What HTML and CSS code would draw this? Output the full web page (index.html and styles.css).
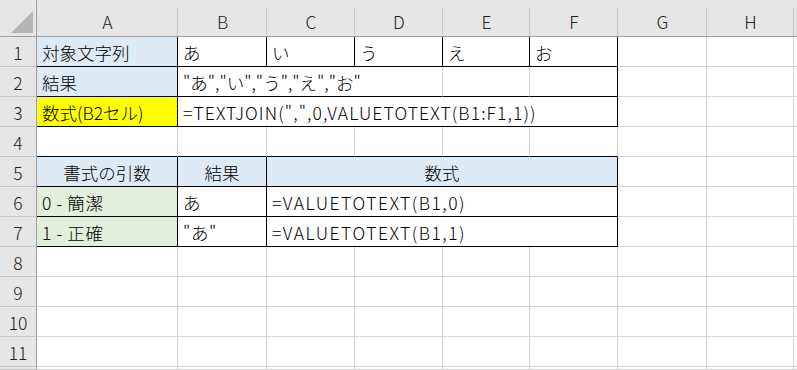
FILE: index.html
```html
<!DOCTYPE html>
<html lang="ja">
<head>
    <meta charset="UTF-8">
    <meta name="viewport" content="width=device-width, initial-scale=1.0">
    <title>VALUETOTEXT</title>
    <link rel="stylesheet" href="styles.css">
</head>
<body>
    <div class="sheet">
        <!-- column headers -->
        <div class="corner"><span class="tri"></span></div>
        <div class="colhead">A</div>
        <div class="colhead">B</div>
        <div class="colhead">C</div>
        <div class="colhead">D</div>
        <div class="colhead">E</div>
        <div class="colhead">F</div>
        <div class="colhead">G</div>
        <div class="colhead">H</div>
        <div class="colhead rest"></div>

        <!-- row 1 -->
        <div class="rowhead">1</div>
        <div class="c blue br bb">対象文字列</div>
        <div class="c br bb">あ</div>
        <div class="c br bb">い</div>
        <div class="c br bb">う</div>
        <div class="c br bb">え</div>
        <div class="c br bb">お</div>
        <div class="c"></div>
        <div class="c"></div>
        <div class="c rest"></div>

        <!-- row 2 -->
        <div class="rowhead">2</div>
        <div class="c blue br bb">結果</div>
        <div class="c bb span3">"あ","い","う","え","お"</div>
        <div class="c bb"></div>
        <div class="c br bb"></div>
        <div class="c"></div>
        <div class="c"></div>
        <div class="c rest"></div>

        <!-- row 3 -->
        <div class="rowhead">3</div>
        <div class="c yellow br bb">数式(B2セル)</div>
        <div class="c br bb span5 join">=TEXTJOIN(",",0,VALUETOTEXT(B1:F1,1))</div>
        <div class="c"></div>
        <div class="c"></div>
        <div class="c rest"></div>

        <!-- row 4 -->
        <div class="rowhead">4</div>
        <div class="c bb"></div>
        <div class="c bb"></div>
        <div class="c bb"></div>
        <div class="c bb"></div>
        <div class="c bb"></div>
        <div class="c bb"></div>
        <div class="c"></div>
        <div class="c"></div>
        <div class="c rest"></div>

        <!-- row 5 -->
        <div class="rowhead">5</div>
        <div class="c blue br bb center">書式の引数</div>
        <div class="c blue br bb center">結果</div>
        <div class="c blue br bb center span4">数式</div>
        <div class="c"></div>
        <div class="c"></div>
        <div class="c rest"></div>

        <!-- row 6 -->
        <div class="rowhead">6</div>
        <div class="c green br bb latin">0 - 簡潔</div>
        <div class="c br bb">あ</div>
        <div class="c br bb span4 formula">=VALUETOTEXT(B1,0)</div>
        <div class="c"></div>
        <div class="c"></div>
        <div class="c rest"></div>

        <!-- row 7 -->
        <div class="rowhead">7</div>
        <div class="c green br bb latin">1 - 正確</div>
        <div class="c br bb latin">"あ"</div>
        <div class="c br bb span4 formula">=VALUETOTEXT(B1,1)</div>
        <div class="c"></div>
        <div class="c"></div>
        <div class="c rest"></div>

        <!-- rows 8 - 11, plus the top edge of the next row -->
        <div class="rowhead">8</div>
        <div class="c"></div><div class="c"></div><div class="c"></div><div class="c"></div>
        <div class="c"></div><div class="c"></div><div class="c"></div><div class="c"></div>
        <div class="c rest"></div>

        <div class="rowhead">9</div>
        <div class="c"></div><div class="c"></div><div class="c"></div><div class="c"></div>
        <div class="c"></div><div class="c"></div><div class="c"></div><div class="c"></div>
        <div class="c rest"></div>

        <div class="rowhead">10</div>
        <div class="c"></div><div class="c"></div><div class="c"></div><div class="c"></div>
        <div class="c"></div><div class="c"></div><div class="c"></div><div class="c"></div>
        <div class="c rest"></div>

        <div class="rowhead">11</div>
        <div class="c"></div><div class="c"></div><div class="c"></div><div class="c"></div>
        <div class="c"></div><div class="c"></div><div class="c"></div><div class="c"></div>
        <div class="c rest"></div>

        <div class="rowhead"></div>
        <div class="c"></div><div class="c"></div><div class="c"></div><div class="c"></div>
        <div class="c"></div><div class="c"></div><div class="c"></div><div class="c"></div>
        <div class="c rest"></div>
    </div>
</body>
</html>
```

FILE: styles.css
```css
html, body {
    margin: 0;
    padding: 0;
    background-color: #fff;
    overflow: hidden;
}
.sheet {
    display: grid;
    grid-template-columns: 37px 141px 89px 88px 88px 87px 88px 89px 87px 1fr;
    grid-template-rows: 37px repeat(11, 30px) 3px;
    width: 797px;
    height: 370px;
    font-family: "Noto Sans CJK JP", sans-serif;
    font-size: 17.5px;
    font-weight: 300;
    color: #000;
}
.sheet > div {
    box-sizing: border-box;
    display: flex;
    align-items: center;
    white-space: nowrap;
    overflow: hidden;
    min-width: 0;
}
.corner {
    background-color: #e6e6e6;
    border-right: 1px solid #9e9e9e;
    border-bottom: 1px solid #9e9e9e;
    justify-content: flex-end;
    align-items: flex-end !important;
    padding: 0 3px 3px 0;
}
.tri {
    width: 22px;
    height: 22px;
    background-color: #b5b5b5;
    clip-path: polygon(100% 0, 100% 100%, 0 100%);
}
.colhead {
    background: linear-gradient(#c6c6c6, #c6c6c6) right 8px / 1px calc(100% - 8px) no-repeat, #e6e6e6;
    border-bottom: 1px solid #9e9e9e;
    justify-content: center;
    padding-top: 7px;
    color: #222;
}
.colhead.rest {
    background: #e6e6e6;
}
.rowhead {
    background-color: #e6e6e6;
    border-right: 1px solid #9e9e9e;
    border-bottom: 1px solid #c8c8c8;
    justify-content: center;
    color: #222;
    padding-top: 1px;
}
.c {
    border-right: 1px solid #d4d4d4;
    border-bottom: 1px solid #d4d4d4;
    padding: 2px 0 0 5px;
}
.c.rest {
    border-right: none;
}
.c.center {
    justify-content: center;
    padding-left: 0;
}
.latin {
    letter-spacing: 0.6px;
}
.join {
    letter-spacing: 1.1px;
}
.formula {
    letter-spacing: 1.5px;
}
.br {
    border-right-color: #000 !important;
}
.bb {
    border-bottom-color: #000 !important;
}
.blue {
    background-color: #ddebf7;
}
.green {
    background-color: #e2efda;
}
.yellow {
    background-color: #ffff00;
}
.span3 {
    grid-column: span 3;
}
.span4 {
    grid-column: span 4;
}
.span5 {
    grid-column: span 5;
}
```
